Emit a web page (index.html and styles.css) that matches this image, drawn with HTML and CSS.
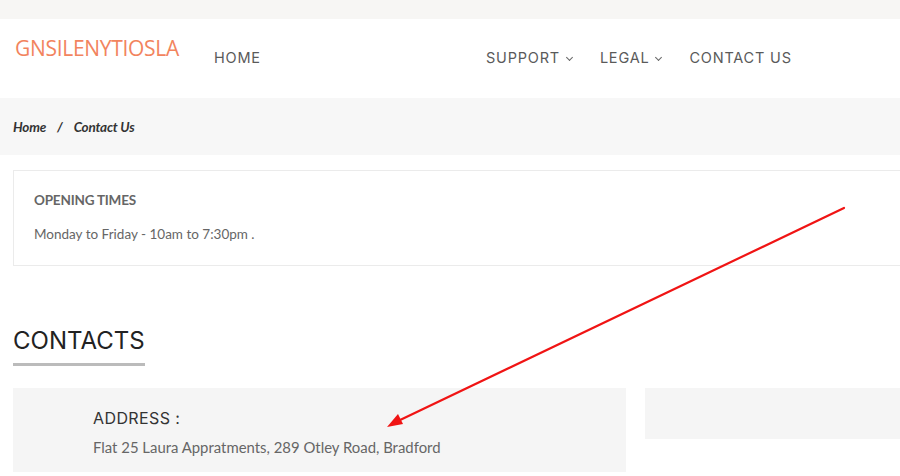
FILE: index.html
```html
<!DOCTYPE html>
<html lang="en">
<head>
    <meta charset="UTF-8">
    <meta name="viewport" content="width=device-width, initial-scale=1.0">
    <title>Contact Us</title>
    <link rel="stylesheet" href="styles.css">
</head>
<body>
    <div class="topbar"></div>
    <header class="header">
        <div class="logo">GNSILENYTIOSLA</div>
        <nav class="nav">
            <a class="nav-home" href="#">HOME</a>
            <div class="nav-right">
                <a href="#">SUPPORT <span class="caret"></span></a>
                <a href="#">LEGAL <span class="caret"></span></a>
                <a href="#">CONTACT US</a>
            </div>
        </nav>
    </header>
    <div class="breadcrumb">
        <a href="#">Home</a><span class="sep">/</span><span>Contact Us</span>
    </div>
    <div class="content">
        <div class="hours-box">
            <h4>OPENING TIMES</h4>
            <p>Monday to Friday - 10am to 7:30pm .</p>
        </div>
        <h2 class="section-title">CONTACTS</h2>
        <div class="cards">
            <div class="card card-address">
                <h3>ADDRESS :</h3>
                <p>Flat 25 Laura Appratments, 289 Otley Road, Bradford</p>
            </div>
            <div class="card card-empty"></div>
        </div>
    </div>
    <svg class="annotation" width="900" height="476" viewBox="0 0 900 476">
        <line x1="844" y1="208" x2="398" y2="421" stroke="#f01414" stroke-width="2.2" stroke-linecap="round"/>
        <polygon points="387,427 398,414 403,424" fill="#f01414"/>
    </svg>
</body>
</html>
```

FILE: styles.css
```css
body {
    margin: 0;
    font-family: "Lato", sans-serif;
    background-color: #fff;
    color: #555;
    width: 900px;
    height: 476px;
    overflow: hidden;
    position: relative;
}
a {
    color: inherit;
    text-decoration: none;
}
.topbar {
    height: 19px;
    background-color: #f7f6f4;
}
.header {
    display: flex;
    height: 79px;
}
.logo {
    font-family: "Open Sans", sans-serif;
    font-size: 21px;
    color: #f2845e;
    padding: 15px 0 0 15px;
    width: 199px;
    letter-spacing: -0.3px;
}
.nav {
    display: flex;
    flex: 1;
    font-family: "Inter", sans-serif;
    font-size: 14.5px;
    color: #5a5a5a;
    letter-spacing: 0.8px;
    padding-top: 30px;
}
.nav-home {
    width: 272px;
}
.nav-right {
    display: flex;
    gap: 28px;
}
.caret {
    display: inline-block;
    width: 4px;
    height: 4px;
    border-right: 1.2px solid #666;
    border-bottom: 1.2px solid #666;
    transform: rotate(45deg);
    margin: 0 0 3px 2px;
}
.breadcrumb {
    height: 57px;
    background-color: #f7f7f7;
    display: flex;
    align-items: center;
    padding-left: 13px;
    font-size: 13.5px;
    font-style: italic;
    font-weight: 700;
    color: #333;
    letter-spacing: -0.2px;
}
.breadcrumb .sep {
    margin: 0 11px;
}
.content {
    padding: 15px 0 0 13px;
}
.hours-box {
    border: 1px solid #ebebeb;
    border-right: none;
    height: 96px;
    padding: 0 0 0 20px;
    box-sizing: border-box;
}
.hours-box h4 {
    margin: 21px 0 0;
    font-size: 13.5px;
    font-weight: 700;
    color: #666;
    letter-spacing: -0.2px;
}
.hours-box p {
    margin: 18px 0 0;
    font-size: 13.5px;
    color: #666;
}
.section-title {
    display: inline-block;
    margin: 60px 0 0;
    padding-bottom: 8px;
    border-bottom: 3px solid #bbb;
    font-family: "Inter", sans-serif;
    font-weight: 400;
    font-size: 24px;
    color: #222;
    letter-spacing: 0;
}
.cards {
    display: flex;
    gap: 19px;
    margin-top: 22px;
    align-items: flex-start;
}
.card {
    background-color: #f5f5f5;
}
.card-address {
    width: 533px;
    height: 84px;
    padding-left: 80px;
}
.card-address h3 {
    margin: 20px 0 0;
    font-family: "Inter", sans-serif;
    font-weight: 400;
    font-size: 16px;
    color: #333;
    letter-spacing: 0.4px;
}
.card-address p {
    margin: 10px 0 0;
    font-size: 14.9px;
    color: #666;
}
.card-empty {
    flex: 1;
    height: 51px;
}
.annotation {
    position: absolute;
    top: 0;
    left: 0;
    pointer-events: none;
}
```
